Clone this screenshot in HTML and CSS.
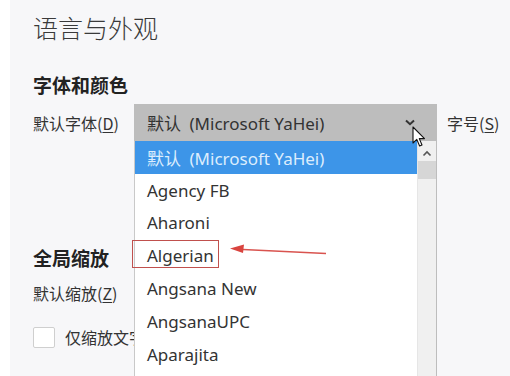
FILE: index.html
```html
<!DOCTYPE html>
<html lang="zh-CN">
<head>
<meta charset="utf-8">
<title>语言与外观</title>
<link rel="stylesheet" href="styles.css">
</head>
<body>
<div class="page">
  <h1 class="title">语言与外观</h1>
  <h2 class="section">字体和颜色</h2>
  <div class="row row-font">
    <span class="label">默认字体(<u>D</u>)</span>
    <div class="select-wrap">
      <div class="select select-open">
        <span class="select-text">默认&ensp;(Microsoft YaHei)</span>
        <svg class="chevron" width="10" height="7" viewBox="0 0 10 7"><path d="M1 1.5 L5 5.2 L9 1.5" fill="none" stroke="#333" stroke-width="2"/></svg>
      </div>
      <div class="dropdown">
        <ul class="options">
          <li class="option selected">默认&ensp;(Microsoft YaHei)</li>
          <li class="option">Agency FB</li>
          <li class="option">Aharoni</li>
          <li class="option marked">Algerian
            <span class="mark-box"></span>
            <svg class="mark-arrow" width="100" height="14" viewBox="0 0 100 14"><path d="M13 6.5 L96 10.5" stroke="#d9534f" stroke-width="1.6" fill="none"/><path d="M0 5.5 L14 1.5 L13 10 Z" fill="#d9443f"/></svg>
          </li>
          <li class="option">Angsana New</li>
          <li class="option">AngsanaUPC</li>
          <li class="option">Aparajita</li>
        </ul>
        <div class="scrollbar">
          <svg class="scroll-up" width="10" height="7" viewBox="0 0 10 7"><path d="M1.5 5.5 L5 2 L8.5 5.5" fill="none" stroke="#555" stroke-width="1.6"/></svg>
          <div class="thumb"></div>
        </div>
      </div>
      <svg class="cursor" width="16" height="22" viewBox="0 0 16 22"><path d="M1 1 L1 17 L4.8 13.4 L7.6 20 L10 19 L7.3 12.6 L12.5 12.6 Z" fill="#fff" stroke="#111" stroke-width="1.1" stroke-linejoin="round"/></svg>
    </div>
    <span class="label-size">字号(<u>S</u>)</span>
  </div>
  <h2 class="section section-zoom">全局缩放</h2>
  <div class="row row-zoom">
    <span class="label">默认缩放(<u>Z</u>)</span>
    <div class="select select-zoom"></div>
  </div>
  <div class="check-row">
    <span class="checkbox"></span>
    <span class="check-text">仅缩放文字</span>
  </div>
</div>
</body>
</html>
```
FILE: styles.css
```css
html, body {
  margin: 0;
  padding: 0;
  background: #f7f7f9;
}
body {
  width: 510px;
  height: 376px;
  overflow: hidden;
  font-family: "Noto Sans", "Noto Sans CJK SC", sans-serif;
  color: #333;
}
.page {
  box-sizing: border-box;
  height: 376px;
  border-left: 10px solid #ffffff;
  padding: 10px 0 0 23px;
  display: flex;
  flex-direction: column;
  align-items: flex-start;
}
.title {
  margin: 0;
  font-family: "Noto Sans CJK SC", sans-serif;
  font-size: 25px;
  line-height: 34px;
  font-weight: 300;
  color: #3a3a3a;
}
.section {
  margin: 29px 0 0;
  font-family: "Noto Sans CJK SC", sans-serif;
  font-size: 19px;
  line-height: 24px;
  font-weight: 700;
  color: #222;
}
.section-zoom {
  margin-top: 105px;
}
.row {
  display: flex;
  align-items: center;
  margin-top: 7px;
}
.row-zoom {
  margin-top: 5px;
}
.label {
  width: 101px;
  font-family: "Noto Sans CJK SC", sans-serif;
  font-size: 16px;
  color: #333;
}
u {
  text-decoration-thickness: 1px;
  text-underline-offset: 2px;
}
.select-wrap {
  position: relative;
}
.select {
  box-sizing: border-box;
  width: 303px;
  height: 37px;
  display: flex;
  align-items: center;
  justify-content: space-between;
  padding: 0 22px 0 13px;
}
.select-open {
  background: #bdbdbd;
}
.select-text {
  font-size: 17px;
  color: #333;
}
.select-zoom {
  height: 35px;
  background: #f4f4f4;
  border: 1px solid #d0d0d0;
}
.chevron {
  display: block;
}
.label-size {
  margin-left: 10px;
  font-family: "Noto Sans CJK SC", sans-serif;
  font-size: 16px;
  color: #333;
}
.dropdown {
  position: absolute;
  top: 37px;
  left: 0;
  width: 303px;
  height: 240px;
  box-sizing: border-box;
  background: #fff;
  border-left: 1px solid #c9c9c9;
  border-right: 1px solid #bdbdbd;
  display: flex;
  z-index: 5;
}
.options {
  list-style: none;
  margin: 0;
  padding: 0;
  flex: 1;
}
.option {
  height: 32.8px;
  display: flex;
  align-items: center;
  padding-left: 12px;
  font-size: 17px;
  color: #333;
}
.option.selected {
  background: #3d95e8;
  color: #dcedfd;
}
.marked {
  position: relative;
}
.mark-box {
  position: absolute;
  left: -3px;
  top: 1px;
  width: 87px;
  height: 28px;
  box-sizing: border-box;
  border: 1.5px solid #c0504d;
}
.mark-arrow {
  position: absolute;
  left: 95px;
  top: 4px;
  overflow: visible;
}
.scrollbar {
  width: 18px;
  background: #f0f0f0;
  border-left: 1px solid #e6e6e6;
  display: flex;
  flex-direction: column;
  align-items: center;
}
.scroll-up {
  display: block;
  margin-top: 9px;
}
.thumb {
  margin-top: 4px;
  width: 18px;
  height: 18px;
  background: #d6d6d6;
}
.cursor {
  position: absolute;
  left: 278px;
  top: 22px;
  z-index: 6;
}
.check-row {
  display: flex;
  align-items: center;
  margin-top: 15px;
}
.checkbox {
  box-sizing: border-box;
  width: 22px;
  height: 21px;
  background: #fff;
  border: 1px solid #cfcfcf;
  border-radius: 2px;
}
.check-text {
  margin-left: 10px;
  font-family: "Noto Sans CJK SC", sans-serif;
  font-size: 16px;
  color: #333;
}
```
